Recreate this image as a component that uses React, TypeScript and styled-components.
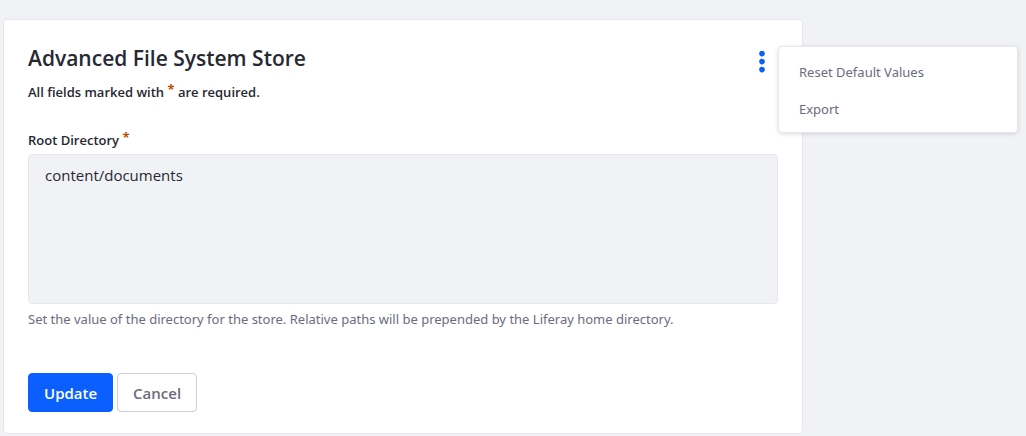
import React from "react";
import styled, { createGlobalStyle } from "styled-components";

const GlobalStyle = createGlobalStyle`
  *, *::before, *::after { box-sizing: border-box; }
  body {
    margin: 0;
    background: #f1f2f5;
    color: #272833;
    font-family: "Segoe UI", "Open Sans", "Noto Sans", sans-serif;
    font-size: 15px;
    line-height: 24px;
  }
`;

const Page = styled.main`
  padding: 19px 223px 2px 3px;
`;

const Sheet = styled.form`
  padding: 26px 24px 21px;
  background: #fff;
  border: 1px solid #e7e7ed;
  border-radius: 4px;
`;

const SheetHeader = styled.header`
  display: flex;
  justify-content: space-between;
  align-items: flex-start;
`;

const Title = styled.h2`
  margin: 0;
  font-size: 21px;
  font-weight: 600;
  line-height: 24px;
`;

const RequiredNote = styled.p`
  margin: 12px 0 0;
  font-size: 13px;
  font-weight: 600;
  line-height: 21px;
`;

const Asterisk = styled.span`
  color: #b95000;
  font-weight: 700;
  line-height: 1;
  vertical-align: 3px;
`;

const Actions = styled.div`
  position: relative;
`;

const KebabButton = styled.button`
  display: flex;
  align-items: center;
  justify-content: center;
  width: 32px;
  height: 32px;
  padding: 0;
  border: 0;
  border-radius: 4px;
  background: transparent;
  color: #0b5fff;
  cursor: pointer;
`;

const Menu = styled.ul`
  position: absolute;
  top: 0;
  left: 100%;
  width: 240px;
  margin: 0;
  padding: 7px 0 4px;
  list-style: none;
  background: #fff;
  border: 1px solid #e7e7ed;
  border-radius: 4px;
  box-shadow: 0 1px 5px -1px rgba(0, 0, 0, 0.2);
`;

const MenuItem = styled.a`
  display: block;
  padding: 8px 20px;
  color: #6b6c7e;
  font-family: "Segoe UI", "Noto Sans", sans-serif;
  font-size: 13px;
  line-height: 21px;
  text-decoration: none;
`;

const Field = styled.div`
  margin-top: 27px;
`;

const Label = styled.label`
  display: block;
  margin-bottom: 3px;
  font-size: 13px;
  font-weight: 600;
  line-height: 21px;
`;

const TextArea = styled.textarea`
  display: block;
  width: 100%;
  height: 150px;
  padding: 8px 16px;
  resize: none;
  background: #f1f2f5;
  border: 1px solid #e7e7ed;
  border-radius: 4px;
  color: #272833;
  font: inherit;
`;

const HelpText = styled.p`
  margin: 5px 0 0;
  color: #6b6c7e;
  font-family: "Segoe UI", "Noto Sans", sans-serif;
  font-size: 13px;
  line-height: 21px;
`;

const ButtonRow = styled.div`
  display: flex;
  gap: 4px;
  margin-top: 43px;
`;

const Button = styled.button<{ $primary?: boolean }>`
  padding: 8px 15px 6px;
  border: 1px solid ${(p) => (p.$primary ? "#0b5fff" : "#cdced9")};
  border-radius: 4px;
  background: ${(p) => (p.$primary ? "#0b5fff" : "#fff")};
  color: ${(p) => (p.$primary ? "#fff" : "#6b6c7e")};
  font: inherit;
  font-weight: 600;
  line-height: 23px;
  cursor: pointer;
`;

function EllipsisIcon() {
  return (
    <svg width="6" height="22" viewBox="0 0 6 22" fill="currentColor" aria-hidden="true">
      <circle cx="3" cy="2.6" r="2.8" />
      <circle cx="3" cy="10.6" r="2.8" />
      <circle cx="3" cy="18.6" r="2.8" />
    </svg>
  );
}

export default function App() {
  return (
    <>
      <GlobalStyle />
      <Page>
        <Sheet onSubmit={(e) => e.preventDefault()}>
          <SheetHeader>
            <div>
              <Title>Advanced File System Store</Title>
              <RequiredNote>
                All fields marked with <Asterisk>*</Asterisk> are required.
              </RequiredNote>
            </div>
            <Actions>
              <KebabButton type="button" aria-label="Actions" aria-haspopup="true" aria-expanded="true">
                <EllipsisIcon />
              </KebabButton>
              <Menu>
                <li><MenuItem href="#reset">Reset Default Values</MenuItem></li>
                <li><MenuItem href="#export">Export</MenuItem></li>
              </Menu>
            </Actions>
          </SheetHeader>
          <Field>
            <Label htmlFor="rootDirectory">
              Root Directory <Asterisk>*</Asterisk>
            </Label>
            <TextArea id="rootDirectory" required aria-describedby="rootHelp" defaultValue="content/documents" />
            <HelpText id="rootHelp">
              Set the value of the directory for the store. Relative paths will be prepended by the Liferay home directory.
            </HelpText>
          </Field>
          <ButtonRow>
            <Button type="submit" $primary>Update</Button>
            <Button type="button">Cancel</Button>
          </ButtonRow>
        </Sheet>
      </Page>
    </>
  );
}
